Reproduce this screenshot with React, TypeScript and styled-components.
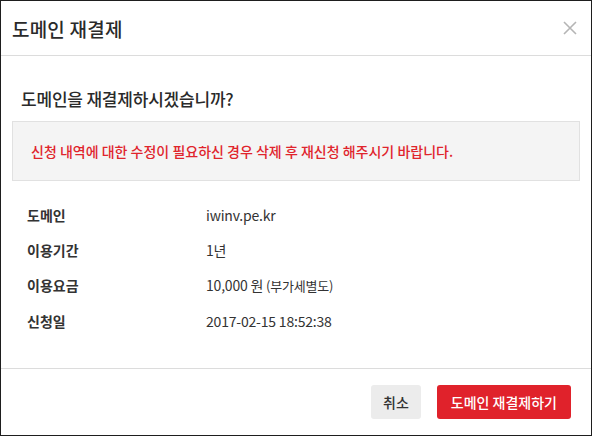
import React from 'react';
import styled, { createGlobalStyle } from 'styled-components';

const GlobalStyle = createGlobalStyle`
  html, body {
    margin: 0;
    padding: 0;
    background: #ffffff;
  }
  * {
    box-sizing: border-box;
  }
`;

const Modal = styled.div`
  width: 592px;
  height: 436px;
  border: 1px solid #1e1e1e;
  background: #fff;
  display: flex;
  flex-direction: column;
  font-family: 'Noto Sans CJK KR', 'Noto Sans', sans-serif;
  color: #333;
`;

const Header = styled.div`
  height: 55px;
  flex-shrink: 0;
  padding: 0 14px 0 11px;
  border-bottom: 1px solid #dcdcdc;
  display: flex;
  align-items: center;
  justify-content: space-between;
`;

const Title = styled.h1`
  margin: 0;
  font-size: 19px;
  font-weight: 500;
  letter-spacing: 0.2px;
  color: #2a2a2a;
`;

const CloseButton = styled.button`
  background: none;
  border: none;
  padding: 0;
  display: flex;
  cursor: pointer;
`;

const Body = styled.div`
  flex: 1;
  padding: 30px 11px 0 11px;
  border-bottom: 1px solid #dcdcdc;
`;

const Question = styled.h2`
  margin: 0 0 0 9px;
  font-size: 17px;
  font-weight: 500;
  letter-spacing: -0.2px;
  line-height: 26px;
  color: #2a2a2a;
`;

const Notice = styled.div`
  margin-top: 9px;
  height: 60px;
  padding: 0 18px;
  display: flex;
  align-items: center;
  background: #f4f4f4;
  border: 1px solid #e1e1e1;
  color: #e0242c;
  font-size: 14px;
  font-weight: 500;
  letter-spacing: 0;
`;

const InfoList = styled.div`
  margin-top: 16px;
  padding-left: 15px;
  display: flex;
  flex-direction: column;
`;

const Row = styled.div`
  display: grid;
  grid-template-columns: 179px 1fr;
  height: 35.3px;
  align-items: center;
`;

const Label = styled.span`
  font-size: 14px;
  font-weight: 700;
  color: #333;
`;

const Value = styled.span`
  font-size: 14px;
  color: #333;
  letter-spacing: -0.2px;
`;

const Small = styled.span`
  font-size: 13px;
`;

const Footer = styled.div`
  height: 66px;
  flex-shrink: 0;
  padding: 0 20px 0 0;
  display: flex;
  align-items: center;
  justify-content: flex-end;
  gap: 16px;
`;

const Button = styled.button<{ $primary?: boolean }>`
  height: 34px;
  padding: 0 ${({ $primary }) => ($primary ? '14px' : '12px')};
  border: none;
  border-radius: 3px;
  background: ${({ $primary }) => ($primary ? '#e0222b' : '#ececec')};
  color: ${({ $primary }) => ($primary ? '#fff' : '#333')};
  font-family: inherit;
  font-size: 14px;
  font-weight: 500;
  cursor: pointer;
`;

interface InfoRow {
  label: string;
  value: React.ReactNode;
}

const rows: InfoRow[] = [
  { label: '도메인', value: 'iwinv.pe.kr' },
  { label: '이용기간', value: '1년' },
  {
    label: '이용요금',
    value: (
      <>
        10,000 원 <Small>(부가세별도)</Small>
      </>
    ),
  },
  { label: '신청일', value: '2017-02-15 18:52:38' },
];

const App = () => (
  <>
    <GlobalStyle />
    <Modal>
      <Header>
        <Title>도메인 재결제</Title>
        <CloseButton aria-label="닫기">
          <svg width="14" height="14" viewBox="0 0 14 14">
            <path d="M1 1L13 13M13 1L1 13" stroke="#b5b5b5" strokeWidth="1.6" />
          </svg>
        </CloseButton>
      </Header>
      <Body>
        <Question>도메인을 재결제하시겠습니까?</Question>
        <Notice>신청 내역에 대한 수정이 필요하신 경우 삭제 후 재신청 해주시기 바랍니다.</Notice>
        <InfoList>
          {rows.map((row) => (
            <Row key={row.label}>
              <Label>{row.label}</Label>
              <Value>{row.value}</Value>
            </Row>
          ))}
        </InfoList>
      </Body>
      <Footer>
        <Button>취소</Button>
        <Button $primary>도메인 재결제하기</Button>
      </Footer>
    </Modal>
  </>
);

export default App;
